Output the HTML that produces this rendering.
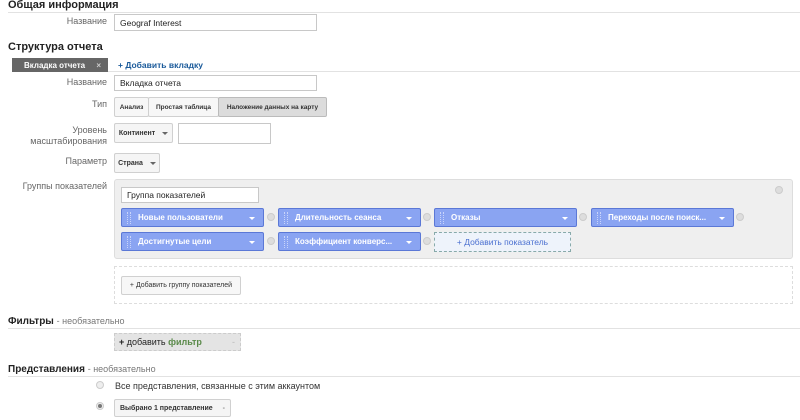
<!DOCTYPE html>
<html><head><meta charset="utf-8"><style>
*{box-sizing:border-box;margin:0;padding:0}
body{width:800px;height:420px;background:#fff;font-family:"Liberation Sans",sans-serif;font-size:9px;color:#333;position:relative;overflow:hidden}
.a{position:absolute;white-space:nowrap}
.h{font-weight:bold;font-size:11px;color:#222}
.lbl{position:absolute;right:693px;text-align:right;color:#666;font-size:9px;line-height:11px;white-space:nowrap}
.in{position:absolute;border:1px solid #c8c8c8;background:#fff;padding:0 5px;font-size:8.5px;color:#222;display:flex;align-items:center;white-space:nowrap}
.btn{position:absolute;border:1px solid #d0d0d0;background:#f5f5f5;font-size:7px;font-weight:bold;color:#333;display:flex;align-items:center;justify-content:center;padding:0 3px;border-radius:2px;white-space:nowrap;overflow:hidden}
.line{position:absolute;height:1px;background:#e2e2e2}
.chip{position:absolute;height:19px;width:143px;background:#8aa4f2;border:1px solid #5b78d6;border-radius:2px;color:#fff;font-weight:bold;font-size:8px;display:flex;align-items:center;padding-left:16px;white-space:nowrap}
.chip:after{content:"";position:absolute;right:8px;top:8px;border:3px solid transparent;border-top-color:#fff}
.chip:before{content:"";position:absolute;left:5px;top:3px;width:2px;height:12px;border-left:1px dotted #c9d4fa;border-right:1px dotted #c9d4fa}
.dot{position:absolute;width:8px;height:8px;border-radius:50%;background:#ddd;border:1px solid #ccc}
.arr{display:inline-block;margin-left:7px;border:3px solid transparent;border-top-color:#666;margin-top:3px}
</style></head><body>
<div class="a h" style="left:8px;top:-1px">Общая информация</div>
<div class="line" style="left:8px;top:12px;width:792px"></div>
<div class="lbl" style="top:16px">Название</div>
<div class="in" style="left:114px;top:14px;width:203px;height:17px">Geograf Interest</div>
<div class="a h" style="left:8px;top:41px">Структура отчета</div>
<div class="a" style="left:12px;top:58px;width:96px;height:14px;background:#666;color:#fff;font-weight:bold;font-size:8px;padding:3px 0 0 12px">Вкладка отчета <span style="margin-left:9px;color:#ccc">×</span></div>
<div class="a" style="left:118px;top:60px;color:#1a5a9a;font-weight:bold;font-size:8.5px">+ Добавить вкладку</div>
<div class="line" style="left:108px;top:71px;width:692px"></div>
<div class="lbl" style="top:77px">Название</div>
<div class="in" style="left:114px;top:75px;width:203px;height:16px">Вкладка отчета</div>
<div class="lbl" style="top:99px">Тип</div>
<div class="btn" style="left:114px;top:97px;width:35px;height:20px;background:#f7f7f7;font-size:6.5px">Анализ</div>
<div class="btn" style="left:148px;top:97px;width:71px;height:20px;background:#f7f7f7;font-size:6.5px">Простая таблица</div>
<div class="btn" style="left:218px;top:97px;width:109px;height:20px;background:#dcdcdc;border-color:#bbb;font-size:6.5px">Наложение данных на карту</div>
<div class="lbl" style="top:125px">Уровень<br>масштабирования</div>
<div class="btn" style="left:114px;top:123px;width:59px;height:20px">Континент<span class="arr"></span></div>
<div class="in" style="left:178px;top:123px;width:93px;height:21px"></div>
<div class="lbl" style="top:156px">Параметр</div>
<div class="btn" style="left:114px;top:153px;width:46px;height:20px">Страна<span class="arr"></span></div>
<div class="lbl" style="top:181px">Группы показателей</div>
<div class="a" style="left:114px;top:179px;width:679px;height:80px;background:#efefef;border:1px solid #ddd;border-radius:3px"></div>
<div class="in" style="left:121px;top:187px;width:138px;height:16px">Группа показателей</div>
<div class="dot" style="left:775px;top:186px"></div>
<div class="chip" style="left:121px;top:208px">Новые пользователи</div>
<div class="dot" style="left:267px;top:213px"></div>
<div class="chip" style="left:278px;top:208px">Длительность сеанса</div>
<div class="dot" style="left:423px;top:213px"></div>
<div class="chip" style="left:434px;top:208px">Отказы</div>
<div class="dot" style="left:579px;top:213px"></div>
<div class="chip" style="left:591px;top:208px">Переходы после поиск...</div>
<div class="dot" style="left:736px;top:213px"></div>
<div class="chip" style="left:121px;top:232px">Достигнутые цели</div>
<div class="dot" style="left:267px;top:237px"></div>
<div class="chip" style="left:278px;top:232px">Коэффициент конверс...</div>
<div class="dot" style="left:423px;top:237px"></div>
<div class="a" style="left:434px;top:232px;width:137px;height:20px;border:1px dashed #8aa;background:#eef3fb;color:#4a6fd0;font-size:8.5px;display:flex;align-items:center;justify-content:center">+ Добавить показатель</div>
<div class="a" style="left:114px;top:266px;width:679px;height:38px;border:1px dashed #ddd"></div>
<div class="btn" style="left:121px;top:276px;width:120px;height:19px;font-weight:normal;font-size:7px;background:#f7f7f7">+ Добавить группу показателей</div>
<div class="a" style="left:8px;top:316px;font-size:10px"><b style="color:#222">Фильтры</b> <span style="color:#777;font-size:9px">- необязательно</span></div>
<div class="line" style="left:8px;top:328px;width:792px"></div>
<div class="a" style="left:114px;top:333px;width:127px;height:18px;background:#e4e4e4;border:1px dashed #ccc;font-size:9px;padding:3px 0 0 4px;color:#222"><b>+</b> добавить <b style="color:#5a8a4a">фильтр</b><span style="position:absolute;right:5px;top:3px;color:#bbb">-</span></div>
<div class="a" style="left:8px;top:364px;font-size:10px"><b style="color:#222">Представления</b> <span style="color:#777;font-size:9px">- необязательно</span></div>
<div class="line" style="left:8px;top:376px;width:792px"></div>
<div class="dot" style="left:96px;top:381px;background:#eee"></div>
<div class="a" style="left:115px;top:381px;font-size:9px;color:#333">Все представления, связанные с этим аккаунтом</div>
<div class="dot" style="left:96px;top:402px;background:#eee"><div style="width:4px;height:4px;background:#777;border-radius:50%;margin:1px"></div></div>
<div class="btn" style="left:114px;top:399px;width:117px;height:18px;font-size:7px">Выбрано 1 представление<span style="margin-left:10px;color:#888">-</span></div>
</body></html>
